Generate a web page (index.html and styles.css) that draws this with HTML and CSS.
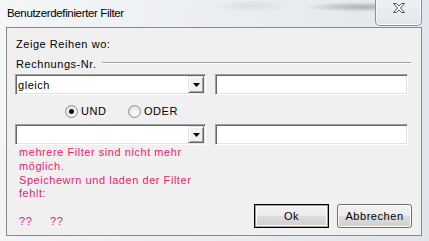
FILE: index.html
```html
<!DOCTYPE html>
<html lang="de">
<head>
  <meta charset="UTF-8" />
  <title>Benutzerdefinierter Filter</title>
  <link rel="stylesheet" href="styles.css">
</head>
<body>

  <div class="fenster">
    <div class="titelleiste">
      <span class="titel">Benutzerdefinierter Filter</span>
      <span class="schliessen">
        <svg width="12" height="10" viewBox="0 0 12 10">
          <path d="M0.5 0.5h3l2.5 2.6 2.5-2.6h3l-4 4.5 4 4.5h-3l-2.5-2.6-2.5 2.6h-3l4-4.5z"
                fill="#fff" stroke="#4b515a" stroke-width="1" stroke-linejoin="round" />
        </svg>
      </span>
    </div>

    <div class="inhalt">
      <div class="hinweis">Zeige Reihen wo:</div>

      <div class="gruppe">
        <span>Rechnungs-Nr.</span>
        <span class="linie"></span>
      </div>

      <div class="zeile">
        <div class="combo">
          <span class="combo-text">gleich</span>
          <span class="pfeil"><svg width="7" height="4" viewBox="0 0 7 4"><path d="M0 0h7l-3.5 4z" fill="#000"/></svg></span>
        </div>
        <div class="textfeld"></div>
      </div>

      <div class="optionen">
        <label class="option"><span class="kreis an"></span>UND</label>
        <label class="option"><span class="kreis"></span>ODER</label>
      </div>

      <div class="zeile zweite">
        <div class="combo">
          <span class="combo-text"></span>
          <span class="pfeil"><svg width="7" height="4" viewBox="0 0 7 4"><path d="M0 0h7l-3.5 4z" fill="#000"/></svg></span>
        </div>
        <div class="textfeld"></div>
      </div>

      <div class="unten">
        <div class="meldung">
          mehrere Filter sind nicht mehr<br>
          möglich.<br>
          Speichewrn und laden der Filter<br>
          fehlt:<br>
          <br>
          <span class="frage">??</span><span class="frage">??</span>
        </div>
        <div class="knoepfe">
          <button class="knopf standard">Ok</button>
          <button class="knopf">Abbrechen</button>
        </div>
      </div>
    </div>
  </div>

</body>
</html>
```

FILE: styles.css
```css
* { box-sizing: border-box; }
body {
  margin: 0;
  width: 429px;
  height: 241px;
  overflow: hidden;
  font-family: "Liberation Sans", Arial, sans-serif;
  font-size: 11px;
  letter-spacing: 0.55px;
  color: #000;
  background: linear-gradient(100deg, #f4f6f8 0%, #eaedf0 55%, #dfe5eb 100%);
}
.fenster     { width: 429px; height: 241px; }

/* ----- Titelleiste (Aero) ----- */
.titelleiste {
  height: 27px;
  display: flex;
  align-items: flex-start;
  padding-left: 7px;
  background:
    radial-gradient(ellipse 58px 5px at 362px 7px, rgba(105,105,105,.45), rgba(105,105,105,0)),
    radial-gradient(ellipse 40px 6px at 250px 6px, rgba(150,150,150,.18), rgba(150,150,150,0));
}
.titel {
  font-size: 11.5px;
  letter-spacing: -0.35px;
  line-height: 16px;
  padding-top: 5px;
  color: #000;
}
.schliessen {
  margin-left: auto;
  margin-right: 7px;
  width: 47px;
  height: 26px;
  border: 1px solid #8c9198;
  border-top: none;
  border-radius: 0 0 5px 5px;
  background: linear-gradient(#eef1f4, #e2e6ea);
  box-shadow: inset 0 -1px 0 rgba(255,255,255,.8), inset 1px 0 0 rgba(255,255,255,.6), inset -1px 0 0 rgba(255,255,255,.6);
  display: flex;
  justify-content: center;
  padding-top: 3px;
  padding-left: 1px;
}
.schliessen svg { display: block; }

/* ----- Client-Bereich ----- */
.inhalt {
  margin-left: 6px;
  width: 416px;
  height: 209px;
  background: #f0f0f0;
  border: 1px solid #858a90;
  padding-top: 10px;
  line-height: 13px;
}
.hinweis     { margin-left: 9px; height: 13px; }
.gruppe {
  display: flex;
  margin: 7px 10px 0 9px;
  height: 13px;
}
.linie {
  flex: 1;
  align-self: flex-start;
  margin: 4px 0 0 5px;
  border-top: 1px solid #a0a0a0;
  border-bottom: 1px solid #fff;
}

.zeile       { display: flex; margin: 3px 0 0 8px; height: 21px; }
.zeile.zweite { margin-top: 6px; }
.combo {
  width: 191px;
  height: 21px;
  display: flex;
  background: #fff;
  border-top: 1px solid #a0a0a0;
  border-left: 1px solid #a0a0a0;
  border-right: 1px solid #fff;
  border-bottom: 1px solid #fff;
  box-shadow: inset 1px 1px 0 #696969, inset -1px -1px 0 #e3e3e3;
  padding: 1px;
}
.combo-text  { flex: 1; padding: 3px 0 0 1px; }
.pfeil {
  width: 16px;
  height: 17px;
  background: #f0f0f0;
  border-top: 1px solid #e3e3e3;
  border-left: 1px solid #e3e3e3;
  border-right: 1px solid #696969;
  border-bottom: 1px solid #696969;
  box-shadow: inset 1px 1px 0 #fff, inset -1px -1px 0 #a0a0a0;
  display: flex;
  justify-content: center;
  align-items: center;
  padding-left: 1px;
}
.pfeil svg   { display: block; }
.textfeld {
  margin-left: 9px;
  width: 193px;
  height: 21px;
  background: #fff;
  border-top: 1px solid #a0a0a0;
  border-left: 1px solid #a0a0a0;
  border-right: 1px solid #fff;
  border-bottom: 1px solid #fff;
  box-shadow: inset 1px 1px 0 #696969, inset -1px -1px 0 #e3e3e3;
}

.optionen    { display: flex; margin: 9px 0 0 58px; height: 14px; }
.option      { display: flex; align-items: center; width: 63px; }
.kreis {
  width: 13px;
  height: 13px;
  margin-right: 3px;
  border-radius: 50%;
  border: 1px solid #8e8f8f;
  background: radial-gradient(circle at 60% 65%, #fdfdfd 0%, #e9e9e9 55%, #cfd1d3 100%);
  display: flex;
  justify-content: center;
  align-items: center;
}
.kreis.an::after {
  content: "";
  width: 5px;
  height: 5px;
  border-radius: 50%;
  background: #111;
}

.unten       { display: flex; }
.meldung {
  margin: 1px 0 0 12px;
  color: #e8246c;
  line-height: 13.8px;
}
.frage       { display: inline-block; width: 31px; }
.knoepfe {
  display: flex;
  gap: 8px;
  margin: 59px 9px 0 auto;
}
.knopf {
  width: 75px;
  height: 24px;
  padding: 0;
  font-family: "Liberation Sans", Arial, sans-serif;
  font-size: 11px;
  letter-spacing: 0.55px;
  color: #000;
  border: 1px solid #707070;
  border-radius: 3px;
  background: linear-gradient(#f2f2f2 0%, #ebebeb 50%, #dddddd 51%, #cfcfcf 100%);
  box-shadow: inset 0 0 0 1px #fcfcfc;
}
.knopf.standard {
  border: 1px solid #000;
  border-radius: 0;
  box-shadow: inset 0 0 0 1px #a0a0a0, inset 0 0 0 2px #fbfbfb;
}
```
